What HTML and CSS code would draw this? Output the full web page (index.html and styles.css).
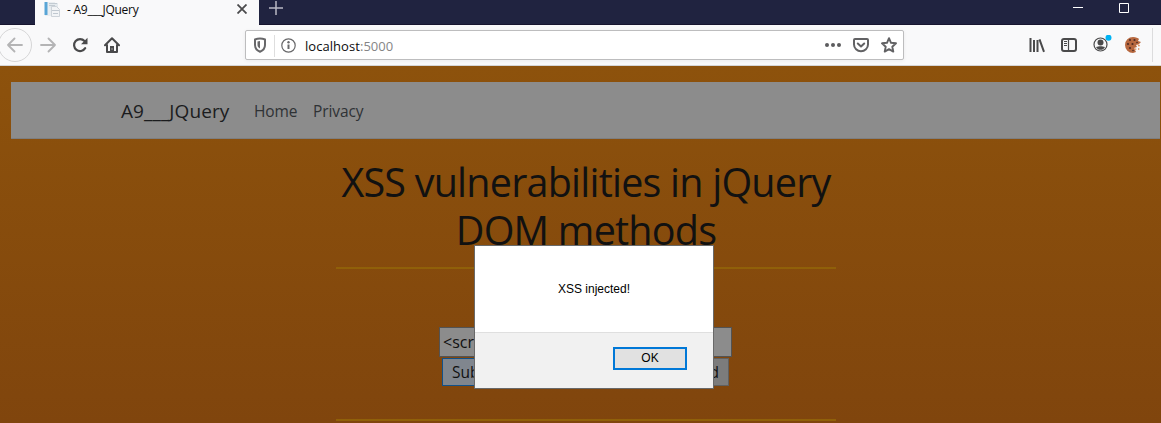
FILE: index.html
```html
<!DOCTYPE html>
<html lang="en">
<head>
<meta charset="utf-8">
<title>- A9___JQuery</title>
<link rel="stylesheet" href="styles.css">
</head>
<body>
<div class="tabs">
  <div class="tab">
    <svg class="favicon" width="17" height="17" viewBox="0 0 17 17"><path d="M1 1h10v14H1z" fill="#e9edf0"/><path d="M.5 1h3v13h-3z" fill="#58a5d6"/><path d="M5 2h9v5H5z" fill="#e4eaee"/><path d="M5 2.500h8M5 4.500h6" stroke="#c3cbd2"/><path d="M7.500 5.500h5l3 3v7h-8z" fill="#f2f4f6" stroke="#cdd3d9"/><path d="M8 9.500h7M9 12.500h5" stroke="#c0c8d0"/></svg>
    <span class="tab-title">- A9___JQuery</span>
    <svg class="close" width="10" height="10" viewBox="0 0 10 10"><path d="M.5.5l9 9M9.500.5l-9 9" stroke="#4a4a4c" stroke-width="1.800"/></svg>
  </div>
  <svg class="plus" width="14" height="14" viewBox="0 0 14 14"><path d="M0 7h14M7 0v14" stroke="#b9b9c4" stroke-width="1.500"/></svg>
  <div class="window-controls">
    <svg width="10" height="10" viewBox="0 0 10 10"><path d="M0 4.500h10" stroke="#fff"/></svg>
    <svg width="10" height="10" viewBox="0 0 10 10"><path d="M.5.5h9v9h-9z" fill="none" stroke="#fff"/></svg>
  </div>
</div>
<div class="toolbar">
  <div class="nav-icons">
    <span class="back"><svg width="16" height="16" viewBox="0 0 16 16" fill="none" stroke="#b4b4b5" stroke-width="1.800" stroke-linecap="round" stroke-linejoin="round"><path d="M15 8H1M7.500 1.500L1 8l6.500 6.500"/></svg></span>
    <svg width="16" height="16" viewBox="0 0 16 16" fill="none" stroke="#b4b4b5" stroke-width="1.800" stroke-linecap="round" stroke-linejoin="round"><path d="M1 8h14M8.500 1.500L15 8l-6.500 6.500"/></svg>
    <svg width="16" height="16" viewBox="0 0 16 16"><path d="M13.200 11.200A6 6 0 1 1 12.500 4" fill="none" stroke="#4a4a4b" stroke-width="2.200" stroke-linecap="round"/><path d="M15.500.8v6.500H9z" fill="#4a4a4b"/></svg>
    <svg width="16" height="16" viewBox="0 0 16 16"><path d="M1 8.300L8 1.300l7 7M3 8v7h10V8" fill="none" stroke="#4a4a4b" stroke-width="2" stroke-linecap="round" stroke-linejoin="round"/><path d="M6 15V9h4v6z" fill="#4a4a4b"/><path d="M8 11.500v1" stroke="#f9f9fa"/></svg>
  </div>
  <div class="urlbar">
    <svg width="14" height="16" viewBox="0 0 14 16"><path d="M7 1.500c2 0 3.600.4 5 1V8c0 3.400-2 5.500-5 6.700C4 13.500 2 11.400 2 8V2.500c1.400-.6 3-1 5-1z" fill="none" stroke="#68686a" stroke-width="2" stroke-linejoin="round"/><path d="M7 4v7.500C5.300 10.700 4.500 9.500 4.500 8V4.500C5.200 4.200 6 4 7 4z" fill="#68686a"/></svg>
    <svg class="info" width="15" height="15" viewBox="0 0 15 15"><circle cx="7.500" cy="7.500" r="6.700" fill="none" stroke="#68686a" stroke-width="1.200"/><path d="M7.500 6.500V11" stroke="#68686a" stroke-width="2"/><circle cx="7.500" cy="4.300" r="1.200" fill="#68686a"/></svg>
    <span class="address">localhost<span class="port">:5000</span></span>
    <div class="url-actions">
      <svg width="16" height="16" viewBox="0 0 16 16" fill="#5c5c5e"><circle cx="2" cy="8" r="2"/><circle cx="8" cy="8" r="2"/><circle cx="14" cy="8" r="2"/></svg>
      <svg width="16" height="16" viewBox="0 0 16 16" fill="none" stroke="#626264" stroke-width="2" stroke-linejoin="round" stroke-linecap="round"><path d="M2 2h12a1 1 0 0 1 1 1v4.500a7 6.700 0 0 1-14 0V3a1 1 0 0 1 1-1zM4.800 6.500L8 9.500l3.200-3"/></svg>
      <svg width="16" height="16" viewBox="0 0 16 16" fill="none" stroke="#626264" stroke-width="1.900" stroke-linejoin="round"><path d="M8 1.200l2 4.600 5 .5-3.700 3.400 1 4.900L8 12.100l-4.300 2.500 1-4.900L1 6.300l5-.5z"/></svg>
    </div>
  </div>
  <div class="tools">
    <svg width="16" height="16" viewBox="0 0 16 16" stroke="#4a4a4b" stroke-width="2"><path d="M1.500 1v14M5 3v12M8.500 3v12M10.500 2.300L15 14.800"/></svg>
    <svg class="sidebar" width="16" height="16" viewBox="0 0 16 16" fill="none" stroke="#4a4a4b"><rect x="1" y="2" width="14" height="12" rx="2" stroke-width="2"/><path d="M7.500 2v12" stroke-width="1.200"/><path d="M3 4.500h3M3 6.500h3M3 8.500h3"/></svg>
    <svg class="account" width="19" height="18" viewBox="0 0 19 18"><circle cx="7.500" cy="9.500" r="6.500" fill="none" stroke="#4a4a4b" stroke-width="1.200"/><circle cx="7.500" cy="7.500" r="3" fill="#4a4a4b"/><path d="M3 12c2 0 2.500-.7 4.500-.7s2.500.7 4.500.7c-1 2-2.600 2.800-4.500 2.800S4 14 3 12z" fill="#4a4a4b"/><circle cx="15.500" cy="2.700" r="3" fill="#00b3f4"/></svg>
    <svg class="cookie" width="17" height="16" viewBox="0 0 17 16"><path d="M8 0c3 0 5 1 6 2l-1 2 3 1-2 2-3 1 1 2-3 1 2 4-3 1A8 8 0 1 1 8 0z" fill="#b7683f"/><path d="M12 7l3 1-1 2zM9 11l3 1-2 1zM13 11l2 1-2 1z" fill="#d98957"/><g fill="#4c2a24"><circle cx="5" cy="3" r="1"/><circle cx="9.500" cy="3" r="1.100"/><circle cx="3" cy="7" r="1.100"/><circle cx="7.500" cy="7" r="1.100"/><circle cx="5" cy="11" r="1.100"/><circle cx="12" cy="5.500" r=".8"/><circle cx="8" cy="13.500" r=".8"/></g></svg>
  </div>
</div>
<main class="page">
  <nav class="navbar">
    <span class="brand">A9___JQuery</span>
    <span class="link home">Home</span>
    <span class="link privacy">Privacy</span>
  </nav>
  <div class="content">
    <h1>XSS vulnerabilities in jQuery<br>DOM methods</h1>
    <div class="rule"></div>
    <div class="field">&lt;script&gt;</div>
    <div class="buttons"><div class="btn active">Submit</div><div class="btn">Encoded</div></div>
    <div class="rule"></div>
  </div>
</main>
<div class="dialog">
  <div class="message">XSS injected!</div>
  <div class="footer"><div class="ok">OK</div></div>
</div>
</body>
</html>
```
FILE: styles.css
```css
* { box-sizing: border-box; }
body { margin: 0; width: 1161px; height: 423px; overflow: hidden; font-family: "Open Sans", "Noto Sans", sans-serif; }
svg { display: block; flex: none; }
.tabs { height: 25px; background: #202340; border-bottom: 1px solid #17152f; display: flex; }
.tab { flex: none; width: 224px; height: 25px; margin-left: 35px; background: #f9f9fa; display: flex; align-items: flex-start; padding-left: 9px; }
.favicon { margin-top: 1px; }
.tab-title { flex: none; margin-left: 6px; font-size: 12px; line-height: 19px; color: #0c0c0d; width: 139px; white-space: nowrap; letter-spacing: -.25px; }
.close { margin: 4px 0 0 31px; }
.plus { margin: 1px 0 0 10px; }
.window-controls { display: flex; gap: 36px; margin: 3px 32px 0 auto; }
.toolbar { height: 41px; background: #f9f9fa; border-bottom: 1px solid #d5d5d6; display: flex; align-items: flex-start; }
.nav-icons { display: flex; align-items: center; width: 245px; margin-top: 3px; gap: 16px; }
.back { width: 34px; height: 34px; margin-left: -2px; margin-right: -8px; border: 1px solid #d6d6d7; border-radius: 50%; display: flex; align-items: center; justify-content: center; }
.urlbar { width: 659px; height: 30px; margin-top: 5px; border: 1px solid #bdbdbe; border-radius: 2px; background: linear-gradient(#dedede, #dedede) 28px 4px / 1px 22px no-repeat #fff; box-shadow: 0 1px 4px rgba(0,0,0,.06); display: flex; align-items: center; padding: 0 6px 0 7px; }
.info { margin-left: 14px; }
.address { margin-left: 9px; font-size: 13px; line-height: 20px; padding-top: 1px; color: #0c0c0d; letter-spacing: .05px; }
.port { color: #858586; }
.url-actions { display: flex; gap: 12px; margin-left: auto; }
.tools { display: flex; align-items: center; width: 124px; height: 34px; margin: 3px 0 0 125px; border-right: 1px solid #dcdcdd; }
.sidebar { margin-left: 16px; }
.account { margin: -3px 0 0 16px; }
.cookie { margin-left: 13px; }
.page { height: 357px; padding: 16px 1px 0 11px; background: linear-gradient(#8d520c, #80450d); }
.navbar { height: 57px; background: #8c8c8c; border-bottom: 1px solid #7e7e7f; display: flex; align-items: center; padding: 2px 0 0 110px; white-space: nowrap; }
.brand { width: 133px; font-size: 19px; letter-spacing: .1px; color: #1b1c1e; }
.link { font-size: 15.500px; letter-spacing: -.1px; color: #2f3235; }
.home { width: 59px; }
.content { width: 500px; margin: 19px 0 0 325px; }
h1 { margin: 0; height: 109px; font-size: 39.500px; line-height: 48px; font-weight: 400; text-align: center; color: #111; white-space: nowrap; letter-spacing: -.78px; }
.rule { height: 2px; background: #906009; }
.field { width: 293px; height: 30px; margin: 58px 0 0 103px; border: 1px solid #535353; background: #8c8c8c; font-size: 16px; line-height: 29px; padding-left: 3px; color: #111; }
.buttons { display: flex; justify-content: space-between; width: 287px; margin: 0 0 33px 106px; padding-top: 1px; }
.btn { height: 28px; border: 1px solid #606060; background: #7c7c7c; font-size: 15.500px; line-height: 27px; padding: 0 9px; color: #111; }
.active { background: #80868e; border-color: #11518a; }
.dialog { position: absolute; left: 474px; top: 245px; width: 240px; height: 144px; border: 1px solid #696969; background: #fff; font-family: "Liberation Sans", Arial, sans-serif; font-size: 12px; color: #000; }
.message { height: 86px; line-height: 86px; text-align: center; }
.footer { height: 56px; background: #f1f1f1; border-top: 1px solid #dfdfdf; padding: 14px 26px 0 0; display: flex; justify-content: flex-end; }
.ok { width: 74px; height: 23px; border: 2px solid #0078d7; background: #e1e1e1; text-align: center; line-height: 19px; }
```
